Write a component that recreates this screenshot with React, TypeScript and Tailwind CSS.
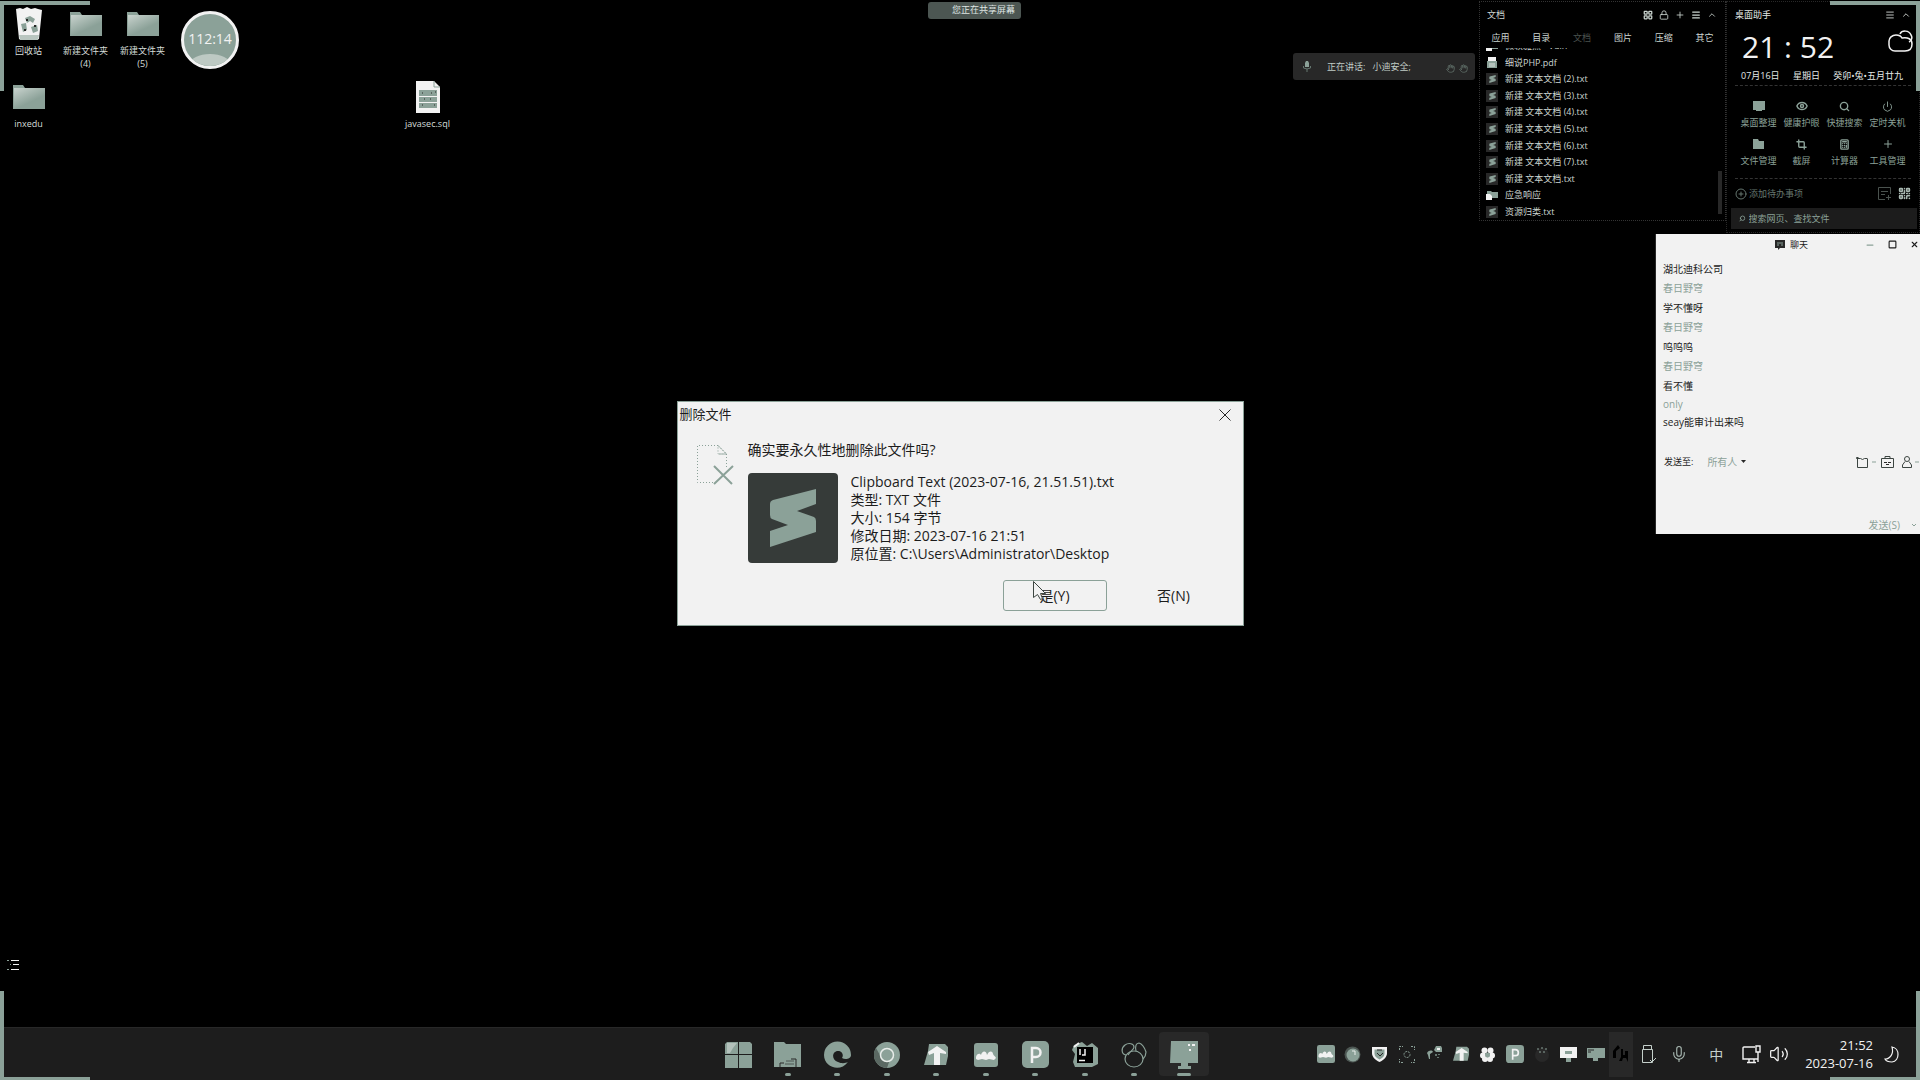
import React from "react";
import {
  Search, Eye, Power, Crop, Plus, Calculator, Menu, ChevronUp, LayoutGrid, QrCode, Mic, Volume2,
  Minus, Square, X, CirclePlus, Lock, Hand,
} from "lucide-react";

const sans = "font-['Open_Sans','Noto_Sans_CJK_SC',sans-serif]";

function Folder() {
  return (
    <svg width="32" height="26" viewBox="0 0 32 26" aria-hidden="true">
      <defs>
        <linearGradient id="folderFace" x1="0" y1="0" x2="0.7" y2="1">
          <stop offset="0" stopColor="#c9d3ce" />
          <stop offset="0.7" stopColor="#8ba198" />
        </linearGradient>
      </defs>
      <path d="M0 1h10l2 3h20v21H0z" fill="#8ba198" />
      <path d="M1 4h31v21H1z" fill="url(#folderFace)" />
    </svg>
  );
}

function RecycleBin() {
  return (
    <svg width="26" height="34" viewBox="0 0 26 34" aria-hidden="true">
      <path d="M0 2l4-1 3 1 4-2 4 2 4-1 3 1 4 1-3 29-3 1H5l-2-1z" fill="#f2f2f2" />
      <path d="M3 28h20l-1 5H4z" fill="#b9c6c0" />
      <path d="M9 11l5-2 5 3-2 4-3-2-3 2zM5 17l5-1 1 7-4 2zM15 20l6-2 1 6-5 2z" fill="#8ba198" />
      <path d="M10 12h2v2h-2zM18 18h2v2h-2zM8 22h2v2H8z" fill="#282828" />
    </svg>
  );
}

function SqlFile() {
  return (
    <svg width="24" height="32" viewBox="0 0 24 32" aria-hidden="true">
      <path d="M0 0h18l6 6v26H0z" fill="#f2f2f2" />
      <path d="M18 0v6h6" fill="none" stroke="#8ba198" />
      <path d="M3 9h18v6H3zM3 16h18v5H3zM3 22h18v5H3z" fill="#8ba198" />
      <path d="M6 12h1M15 12h1M19 11h1M8 18h1M14 18h1M6 24h1M18 24h1" stroke="#282828" />
    </svg>
  );
}

function DesktopIcon({ label, place, children }: { label: string; place: string; children: React.ReactNode }) {
  return (
    <button type="button" className={`flex flex-col items-center ${place}`}>
      <span className="flex h-[34px] items-center justify-center">{children}</span>
      <span className="mt-[3px] w-[50px] text-center text-[9px] leading-[13px] text-[#d5ddd9]">{label}</span>
    </button>
  );
}

function SublimeMark({ className }: { className: string }) {
  return (
    <svg viewBox="0 0 46 58" className={className} aria-hidden="true">
      <path d="M0 15Q0 12 3 11L46 0v15L27 22l17 6q2 1 2 4v11L0 58V42l18-6L2 30Q0 29 0 26z" fill="#8ba198" />
    </svg>
  );
}

function TxtIcon() {
  return (
    <span className="flex size-3 shrink-0 items-center justify-center bg-[#282828]">
      <SublimeMark className="h-[8px] w-[7px]" />
    </span>
  );
}

function PdfIcon() {
  return (
    <svg width="12" height="12" viewBox="0 0 12 12" className="shrink-0" aria-hidden="true">
      <path d="M2 0h8v5H2z" fill="#f2f2f2" />
      <path d="M1 4h10v7H1z" fill="#8ba198" />
      <path d="M3 7h6M3 9h6" stroke="#dfe5e2" />
    </svg>
  );
}

function SmallFolder() {
  return (
    <svg width="12" height="12" viewBox="0 0 12 12" className="shrink-0" aria-hidden="true">
      <path d="M1 2h4l1 1h6v6H1z" fill="#8ba198" />
      <path d="M0 5h4l2 2v4H0z" fill="#f2f2f2" />
    </svg>
  );
}

const files: { name: string; kind: "txt" | "pdf" | "dir" }[] = [
  { name: "微软雅黑 - Vuln", kind: "dir" },
  { name: "细说PHP.pdf", kind: "pdf" },
  { name: "新建 文本文档 (2).txt", kind: "txt" },
  { name: "新建 文本文档 (3).txt", kind: "txt" },
  { name: "新建 文本文档 (4).txt", kind: "txt" },
  { name: "新建 文本文档 (5).txt", kind: "txt" },
  { name: "新建 文本文档 (6).txt", kind: "txt" },
  { name: "新建 文本文档 (7).txt", kind: "txt" },
  { name: "新建 文本文档.txt", kind: "txt" },
  { name: "应急响应", kind: "dir" },
  { name: "资源归类.txt", kind: "txt" },
];

const tabs = ["应用", "目录", "文档", "图片", "压缩", "其它"];

function DocumentsPanel() {
  return (
    <section className="absolute top-px right-[194px] flex h-[220px] w-[247px] flex-col border border-dotted border-[#333] bg-black text-[9px] text-[#ccd6d1]">
      <header className="flex h-[25px] items-center justify-between pr-2 pl-[7px]">
        <h2>文档</h2>
        <div className="flex gap-[6px]">
          <button type="button" aria-label="视图"><LayoutGrid size={10} strokeWidth={3} /></button>
          <button type="button" aria-label="锁定"><Lock size={10} /></button>
          <button type="button" aria-label="添加"><Plus size={10} /></button>
          <button type="button" aria-label="菜单"><Menu size={10} strokeWidth={3} /></button>
          <button type="button" aria-label="收起"><ChevronUp size={10} /></button>
        </div>
      </header>
      <nav className="flex h-[21px] items-center">
        {tabs.map((t) => (
          <button key={t} type="button" className={t === "文档" ? "flex-1 text-[#4a524e]" : "flex-1"}>{t}</button>
        ))}
      </nav>
      <div className="relative flex-1 overflow-hidden">
        <ul className="-mt-[10px] flex h-[182px] flex-col">
          {files.map((f) => (
            <li key={f.name} className="flex flex-1 items-center gap-[7px] pl-[6px] whitespace-pre">
              {f.kind === "txt" ? <TxtIcon /> : f.kind === "pdf" ? <PdfIcon /> : <SmallFolder />}
              <span className="leading-[16px]">{f.name}</span>
            </li>
          ))}
        </ul>
        <div className="absolute right-[3px] bottom-[6px] h-[43px] w-1 bg-[#282828]" />
      </div>
    </section>
  );
}

const tools: { label: string; icon: React.ReactNode }[] = [
  { label: "桌面整理", icon: <svg width="12" height="11" viewBox="0 0 12 11"><path d="M0 0h12v9H9v1H3V9H0z" fill="#8ba198" /></svg> },
  { label: "健康护眼", icon: <Eye size={12} strokeWidth={3} /> },
  { label: "快捷搜索", icon: <Search size={11} strokeWidth={3} /> },
  { label: "定时关机", icon: <Power size={11} /> },
  { label: "文件管理", icon: <svg width="11" height="10" viewBox="0 0 11 10"><path d="M0 0h5l1 2h5v8H0z" fill="#8ba198" /></svg> },
  { label: "截屏", icon: <Crop size={11} strokeWidth={3} /> },
  { label: "计算器", icon: <Calculator size={11} strokeWidth={3} /> },
  { label: "工具管理", icon: <Plus size={12} /> },
];

function AssistantPanel() {
  return (
    <section className="absolute top-px right-0 flex h-[232px] w-[194px] flex-col border border-dotted border-[#282828] bg-black text-[9px] text-[#e4e9e6]">
      <header className="flex h-[26px] items-center justify-between pr-2 pl-2">
        <h2>桌面助手</h2>
        <div className="flex gap-[6px]">
          <button type="button" aria-label="菜单"><Menu size={10} /></button>
          <button type="button" aria-label="收起"><ChevronUp size={10} /></button>
        </div>
      </header>
      <div className="flex h-[38px] items-center justify-between pr-[6px] pl-[15px]">
        <time className="text-[30px] leading-[38px] text-[#f2f2f2]">21 : 52</time>
        <svg width="25" height="23" viewBox="0 0 25 23" fill="none" stroke="#f2f2f2" strokeWidth="1.5" className="mb-3" aria-hidden="true">
          <path d="M12 4c2-4 9-4 11 1 2 3 0 6-2 7" />
          <path d="M7 21a6 6 0 0 1-6-6v-4c0-3 3-6 7-6 3 0 5 1 6 3 6-1 10 1 10 6 0 5-3 7-7 7z" />
        </svg>
      </div>
      <div className="mx-2 flex h-[20px] items-center justify-between border-b border-dashed border-[#333] pr-2 pl-[6px]">
        <span>07月16日</span><span>星期日</span><span>癸卯•兔•五月廿九</span>
      </div>
      <ul className="mx-1 mt-[10px] grid h-[82px] grid-cols-4 content-start px-[6px] text-[#8ba198]">
        {tools.map((t) => (
          <li key={t.label}>
            <button type="button" className="flex h-[38px] w-full flex-col items-center whitespace-nowrap">
              <span className="flex h-5 items-center">{t.icon}</span>
              <span className="leading-[13px]">{t.label}</span>
            </button>
          </li>
        ))}
      </ul>
      <div className="mx-2 flex h-[30px] items-center border-t border-dashed border-[#333] text-[#65766f]">
        <CirclePlus size={12} />
        <span className="ml-[2px]">添加待办事项</span>
        <button type="button" aria-label="清单" className="ml-auto">
          <svg width="13" height="13" viewBox="0 0 13 13" fill="none" stroke="#4a524e"><path d="M12.500 7V.500H.500v12H7M3 4.500h7M3 7.500h4M8 10.500h5M10.500 8v5" /></svg>
        </button>
        <button type="button" aria-label="二维码" className="ml-[7px] text-[#a9b9b2]"><QrCode size={13} strokeWidth={3} /></button>
      </div>
      <label className="mr-[2px] ml-1 flex h-[21px] items-center bg-[#1c1c1c] px-2 text-[#8ba198]">
        <Search size={7} strokeWidth={3} className="mr-[3px] -scale-x-100" />
        <input aria-label="搜索" placeholder="搜索网页、查找文件" className="w-full bg-transparent outline-none placeholder:text-[#8ba198]" />
      </label>
    </section>
  );
}

const messages = [
  { from: "", text: "湖北迪科公司" },
  { from: "春日野穹", text: "学不懂呀" },
  { from: "春日野穹", text: "呜呜呜" },
  { from: "春日野穹", text: "看不懂" },
];

function ChatWindow() {
  return (
    <section className="absolute top-[234px] right-0 flex h-[300px] w-[265px] flex-col border-l border-[#282828] bg-[#f2f2f2] text-[10px] text-[#1c1c1c]">
      <header className="relative flex h-[21px] items-center justify-center text-[9px]">
        <h2 className="flex items-center gap-[5px] pl-[7px]">
          <svg width="10" height="10" viewBox="0 0 10 10" aria-hidden="true">
            <path d="M0 0h10v8H5L3 10V8H0z" fill="#282828" />
            <path d="M2 3h6M2 5h2M6 5h2" stroke="#8ba198" />
          </svg>
          聊天
        </h2>
        <div className="absolute right-px flex items-center gap-[13px]">
          <button type="button" aria-label="最小化" className="text-[#8ba198]"><Minus size={10} strokeWidth={3} /></button>
          <button type="button" aria-label="最大化"><Square size={9} strokeWidth={3} /></button>
          <button type="button" aria-label="关闭"><X size={9} strokeWidth={3} /></button>
        </div>
      </header>
      <div className="mt-1 flex-1 pl-[7px]">
        {messages.map((m, i) => (
          <div key={i}>
            {m.from && <p className="h-[19px] leading-[19px] text-[#8ba198]">{m.from}</p>}
            <p className="h-5 leading-5">{m.text}</p>
          </div>
        ))}
        <p className="h-[17px] leading-[17px] text-[#8ba198]">only</p>
        <p className="h-[18px] leading-[18px]">seay能审计出来吗</p>
      </div>
      <div className="flex h-5 items-center pl-2">
        <label htmlFor="sendTo" className="text-[9px]">发送至:</label>
        <select id="sendTo" className="ml-[14px] w-[30px] appearance-none bg-transparent text-[#8ba198]">
          <option>所有人</option>
        </select>
        <svg width="5" height="4" viewBox="0 0 5 4" className="ml-1" aria-hidden="true"><path d="M0 0h5L2.500 3z" fill="#282828" /></svg>
        <div className="ml-auto flex items-center gap-[5px] pr-px">
          <button type="button" aria-label="文件" className="flex items-center gap-[3px]">
            <svg width="13" height="12" viewBox="0 0 13 12" fill="none" stroke="#3c4541"><path d="M.500 2.500h4l2 1 2-1h3M1.500 3v8.500h10V3M.500 2.500v-1h2" /></svg>
            <svg width="4" height="2"><path d="M0 1h4" stroke="#8ba198" /></svg>
          </button>
          <button type="button" aria-label="截图">
            <svg width="13" height="12" viewBox="0 0 13 12" fill="none" stroke="#3c4541"><path d="M.500 2.500h12v9H.500zM4 2.500v-2h5v2" /><path d="M3 6.500h3M7 6.500h3M5 8.500h3" stroke="#282828" /></svg>
          </button>
          <button type="button" aria-label="成员" className="ml-[3px] flex items-center gap-[3px]">
            <svg width="10" height="12" viewBox="0 0 10 12" fill="none" stroke="#3c4541"><circle cx="5" cy="3" r="2.500" /><path d="M3 5.500L.500 9v2.500h9V9L7 5.500" /></svg>
            <svg width="4" height="2"><path d="M0 1h4" stroke="#8ba198" /></svg>
          </button>
        </div>
      </div>
      <textarea aria-label="消息" className="h-[44px] resize-none bg-transparent px-2 outline-none" />
      <div className="flex h-[18px] items-center justify-end gap-3 pr-[4px] text-[#8ba198]">
        <button type="button">发送(S)</button>
        <svg width="4" height="4" aria-hidden="true"><path d="M0 1l2 2 2-2" fill="none" stroke="#8ba198" /></svg>
      </div>
    </section>
  );
}

function DeleteDialog() {
  return (
    <section role="dialog" aria-labelledby="dlgTitle" className="relative flex w-[567px] flex-col border border-[#8ba198] bg-[#f2f2f2] text-[14px] text-[#1c1c1c]">
      <header className="flex h-[25px] items-center justify-between pr-3 pl-[2px]">
        <h1 id="dlgTitle" className="text-[13px]">删除文件</h1>
        <button type="button" aria-label="关闭">
          <svg width="12" height="12" viewBox="0 0 12 12"><path d="M.500.500l11 11M11.500.500l-11 11" stroke="#282828" /></svg>
        </button>
      </header>
      <div className="flex pt-[13px] pl-[19px]">
        <svg width="38" height="42" viewBox="0 0 38 42" fill="none" className="mt-[5px] shrink-0" aria-hidden="true">
          <path d="M21 .500H.500v37H18M29.500 22V9L21 .500V9h8" stroke="#8ba198" strokeDasharray="1 2" />
          <path d="M21 .500L29.500 9H22" stroke="#8ba198" strokeDasharray="2 1" />
          <path d="M17 21l18 18M36 21L17 39" stroke="#8ba198" strokeWidth="2" />
        </svg>
        <div className="ml-[13px]">
          <p className="leading-[20px]">确实要永久性地删除此文件吗?</p>
          <div className="mt-[13px] flex">
            <div className="flex size-[90px] items-center justify-center rounded-[4px] bg-[#363b39]">
              <SublimeMark className="h-[58px] w-[46px]" />
            </div>
            <div className="ml-[13px] leading-[18px]">
              <p>Clipboard Text (2023-07-16, 21.51.51).txt</p>
              <p>类型: TXT 文件</p>
              <p>大小: 154 字节</p>
              <p>修改日期: 2023-07-16 21:51</p>
              <p>原位置: C:\Users\Administrator\Desktop</p>
            </div>
          </div>
        </div>
      </div>
      <div className="flex justify-end gap-[15px] pt-[17px] pr-[17px] pb-[14px]">
        <button type="button" className="h-[31px] w-[104px] rounded-[3px] border border-[#8ba198]">是(Y)</button>
        <button type="button" className="h-[31px] w-[104px]">否(N)</button>
      </div>
      <svg width="14" height="20" viewBox="0 0 14 20" className="absolute top-[179px] left-[355px]" aria-hidden="true">
        <path d="M.500.500v16l4-3 3 5 2-1-2-5h5z" fill="#f2f2f2" stroke="#3c4541" />
      </svg>
    </section>
  );
}

function Lime({ size }: { size: number }) {
  return (
    <svg width={size} height={size} viewBox="0 0 24 24"><rect width="24" height="24" rx="3" fill="#8ba198" />
      <path d="M2 14c1-4 4-4 5-2 1-4 5-5 6 0 2-5 6-4 6-1 1 2 2 2 3 4l-2 2-5-1-3 1-4-1-4 1-2-1z" fill="#f2f2f2" /></svg>
  );
}
function ParkP({ size }: { size: number }) {
  return (
    <svg width={size} height={size} viewBox="0 0 27 27"><rect width="27" height="27" rx="5" fill="#8ba198" />
      <path d="M10 22V7h4a4 4 0 0 1 0 9h-4" fill="none" stroke="#f2f2f2" strokeWidth="2.500" /></svg>
  );
}
function Typo({ size }: { size: number }) {
  return (
    <svg width={size} height={size} viewBox="0 0 24 24"><path d="M5 1h16l3 3v9l-2 9H0L4 8z" fill="#8ba198" />
      <path d="M4 9l9-6 9 6v2l-6-1v12h-6V10l-5 2z" fill="#f2f2f2" /></svg>
  );
}

const apps: { name: string; icon: React.ReactNode }[] = [
  { name: "开始", icon: <svg width="27" height="26" viewBox="0 0 27 26"><path d="M2 0h11v12H0V2zM14 0h11l2 2v10H14zM0 13h13v13H0zM14 13h13v13H14z" fill="#8ba198" /><path d="M2 1h10L8 6 5 11H2z" fill="#b3c1bb" /></svg> },
  { name: "文件资源管理器", icon: <svg width="27" height="25" viewBox="0 0 27 25"><path d="M0 0h10l2 2h15v23H0z" fill="#8ba198" /><path d="M6 25v-4h4M17 17h5v8" fill="none" stroke="#282828" /><path d="M12 19h8M11 22h9" stroke="#4c5652" /></svg> },
  { name: "Edge", icon: <svg width="27" height="27" viewBox="0 0 27 27"><path d="M0 14a13.500 13.500 0 1 1 27 0c0 4-6 5-9 3 2-3 0-7-4-7-6 0-7 9 0 11 4 2 8 1 10 0-8 11-24 5-24-7z" fill="#8ba198" /></svg> },
  { name: "Chrome", icon: <svg width="26" height="26" viewBox="0 0 26 26"><circle cx="13" cy="13" r="13" fill="#8ba198" /><path d="M2 6a13 13 0 0 0 11 20l2-6-8-5z" fill="#5b6963" /><circle cx="13" cy="13" r="6.500" fill="#8ba198" stroke="#e8edea" strokeWidth="1.500" /></svg> },
  { name: "Typora", icon: <Typo size={24} /> },
  { name: "墨刀", icon: <Lime size={24} /> },
  { name: "PixPin", icon: <ParkP size={27} /> },
  { name: "IntelliJ IDEA", icon: <svg width="26" height="26" viewBox="0 0 26 26"><path d="M2 3l8-3 5 4 5-3 6 5v16l-6 3H3l-2-5 2-8-3-4z" fill="#8ba198" /><path d="M2 5l5-4" stroke="#f2f2f2" strokeWidth="2" /><path d="M5 5h16v16H5z" fill="#000" /><path d="M8 7v6M13 7v6h-3M7 18.500h6" stroke="#f2f2f2" strokeWidth="1.500" fill="none" /></svg> },
  { name: "抓包工具", icon: <svg width="26" height="26" viewBox="0 0 26 26" fill="none" stroke="#8ba198" strokeWidth="1.200"><ellipse cx="13" cy="17" rx="9" ry="8" /><path d="M5 13C0 12 0 6 4 3c4-3 9-1 9 2 0 3-4 4-6 8M15 9c-1-5 0-8 3-8 4 1 6 6 7 9 0 3-1 5-3 7" /></svg> },
  { name: "远程桌面", icon: <svg width="28" height="28" viewBox="0 0 28 28"><path d="M1 0h27v22h-10v3h3v3H8v-3h3v-3H0z" fill="#8ba198" /><path d="M18 4h2M22 4h3M19 9h2" stroke="#f2f2f2" strokeWidth="2" /></svg> },
];

const tray: { name: string; icon: React.ReactNode }[] = [
  { name: "墨刀", icon: <Lime size={18} /> },
  { name: "同步", icon: <svg width="17" height="17" viewBox="0 0 17 17"><circle cx="8.500" cy="8.500" r="8" fill="#4c5652" /><circle cx="9" cy="9" r="6.500" fill="#8ba198" /><path d="M8 5h3v4" stroke="#e8edea" fill="none" /></svg> },
  { name: "安全中心", icon: <svg width="15" height="16" viewBox="0 0 15 16"><path d="M0 1h15v6c0 4-3 7-7.500 9C3 14 0 11 0 7z" fill="#f2f2f2" /><path d="M2.500 3.500h10v4c0 3-2 4.500-5 6-3-1.500-5-3-5-6z" fill="#8ba198" /><path d="M5 4h5M5 7l3 3 3-3" stroke="#282828" fill="none" /></svg> },
  { name: "截图", icon: <svg width="16" height="17" viewBox="0 0 16 17" fill="none" stroke="#8ba198" strokeDasharray="2 1"><path d="M.500 4V.500H4M12 .500h3.500V4M15.500 13v3.500H12M4 16.500H.500V13" /><circle cx="8" cy="8.500" r="3" /></svg> },
  { name: "微信", icon: <svg width="16" height="16" viewBox="0 0 16 16"><path d="M1 7c2-3 5-3 6-1l-3 2v5H3l-1-4z" fill="#8ba198" /><path d="M10 0h5l1 2v4h-6L8 4z" fill="#8ba198" /><path d="M9 8h2v2H9zM12 8h2v1h-2zM11 11h2v1h-2z" fill="#65766f" /><path d="M11 2h3v2h-3z" fill="#f2f2f2" /></svg> },
  { name: "Typora", icon: <Typo size={16} /> },
  { name: "云服务", icon: <svg width="15" height="15" viewBox="0 0 15 15"><g fill="#f2f2f2"><circle cx="4.500" cy="3.500" r="3" /><circle cx="10.500" cy="3.500" r="3" /><circle cx="3" cy="8.500" r="3" /><circle cx="12" cy="8.500" r="3" /><circle cx="5" cy="12" r="3" /><circle cx="10" cy="12" r="3" /></g><circle cx="7.500" cy="8" r="2.500" fill="#8ba198" /></svg> },
  { name: "PixPin", icon: <ParkP size={18} /> },
  { name: "输入法", icon: <svg width="16" height="16" viewBox="0 0 16 16"><circle cx="8" cy="9" r="7" fill="#282828" /><path d="M3 3h2M7 2h2M11 3h2M5 6h2M9 6h2" stroke="#8ba198" /></svg> },
  { name: "屏幕共享", icon: <svg width="17" height="16" viewBox="0 0 17 16"><path d="M0 1h17v11H0z" fill="#f2f2f2" /><path d="M5 5h7v3H5zM6 12h5v4H6z" fill="#8ba198" /></svg> },
  { name: "显示器", icon: <svg width="18" height="14" viewBox="0 0 18 14"><path d="M0 1h18v10h-7v3H6v-3H0z" fill="#8ba198" /><path d="M1 3h6M1 5h3" stroke="#282828" /></svg> },
];

function Taskbar() {
  return (
    <footer className="grid h-[53px] grid-cols-[1fr_497px_1fr] border-t border-[#282828] bg-[#1d1d1d]">
      <div />
      <nav className="grid grid-cols-10 pl-[2px]">
        {apps.map((a, i) => (
          <button
            key={a.name}
            type="button"
            aria-label={a.name}
            className={i === 9 ? "my-1 flex flex-col items-center rounded-[4px] bg-[#282828]" : "my-1 flex flex-col items-center"}
          >
            <span className="mt-[8px] flex h-[29px] items-center">{a.icon}</span>
            {i > 0 && <span className={i === 9 ? "mt-[4px] h-[3px] w-[14px] rounded bg-[#8ba198]" : "mt-[4px] h-[3px] w-[6px] rounded bg-[#8ba198]"} />}
          </button>
        ))}
      </nav>
      <div className="flex items-center justify-end pr-[21px]">
        {tray.map((t) => (
          <button key={t.name} type="button" aria-label={t.name} className="flex h-5 w-[27px] items-center justify-center">{t.icon}</button>
        ))}
        <button type="button" aria-label="Sublime" className="flex h-[45px] w-[24px] items-center justify-center bg-[#282828]">
          <svg width="16" height="18" viewBox="0 0 16 18"><path d="M5 0L0 6v7h3V6l4-3zM8 4v8l-2 4h3l1-3h3l2 4V6h-3v4h-2V4z" fill="#000" /></svg>
        </button>
        <button type="button" aria-label="U盘" className="ml-[9px]">
          <svg width="14" height="18" viewBox="0 0 14 18" fill="none" stroke="#c5d0cb"><path d="M1.500.500h8v4h-8zM.500 4.500h10v13H.500zM8 15l2 2 4-4" /></svg>
        </button>
        <button type="button" aria-label="麦克风" className="ml-[14px] text-[#a9b9b2]"><Mic size={18} strokeWidth={1.5} /></button>
        <button type="button" aria-label="输入法中文" className="ml-[21px] text-[14px] text-[#c5d0cb]">中</button>
        <button type="button" aria-label="网络" className="ml-[19px]">
          <svg width="19" height="19" viewBox="0 0 19 19" fill="none" stroke="#f2f2f2" strokeWidth="1.400"><path d="M13 2H2a1 1 0 0 0-1 1v11h15v-5M5 17.500h9M7 14v3M12 14v3M14 1h4v6h-4zM16 7v10" /></svg>
        </button>
        <button type="button" aria-label="音量" className="ml-[8px] text-[#f2f2f2]"><Volume2 size={20} strokeWidth={1.5} /></button>
        <time className="ml-[16px] text-right text-[13px] leading-[18px] text-[#f2f2f2]">
          21:52<br />2023-07-16
        </time>
        <button type="button" aria-label="专注" className="ml-[11px]">
          <svg width="15" height="17" viewBox="0 0 15 17" fill="none" stroke="#f2f2f2" strokeWidth="1.200"><path d="M8 1c8 1 8 14 0 15-3 0-6-1-7-3 5 0 9-5 7-12z" /></svg>
        </button>
      </div>
    </footer>
  );
}

export default function App() {
  return (
    <div className={`relative flex min-h-screen flex-col overflow-hidden bg-black ${sans}`}>
      <main className="relative flex flex-1 items-center justify-center">
        <div className="absolute top-[7px] left-0 grid auto-rows-[73px] grid-cols-[repeat(8,57px)]">
          <DesktopIcon label="回收站" place="col-start-1 row-start-1"><RecycleBin /></DesktopIcon>
          <DesktopIcon label="新建文件夹 (4)" place="col-start-2 row-start-1"><Folder /></DesktopIcon>
          <DesktopIcon label="新建文件夹 (5)" place="col-start-3 row-start-1"><Folder /></DesktopIcon>
          <DesktopIcon label="inxedu" place="col-start-1 row-start-2"><Folder /></DesktopIcon>
          <DesktopIcon label="javasec.sql" place="col-start-8 row-start-2"><SqlFile /></DesktopIcon>
        </div>
        <div className="absolute top-[11px] left-[181px] flex size-[58px] items-center justify-center overflow-hidden rounded-full border-[3px] border-[#f2f2f2] bg-[#8ba198] pb-[3px]">
          <div className="absolute -bottom-[8px] h-[20px] w-[40px] rounded-[50%] bg-[#bdc9c3]" />
          <span className="relative text-[14px] text-[#f2f2f2]">112:14</span>
        </div>
        <div className="absolute top-[2px] left-[928px] flex h-[17px] w-[93px] items-center justify-end rounded-[3px] bg-[#4c5652] pr-[6px] pb-px text-[9px] text-[#dfe5e2]">您正在共享屏幕</div>
        <div className="absolute top-[53px] right-[445px] flex h-[27px] w-[182px] items-center rounded-[3px] bg-[#282828] pr-[7px] pl-[10px] text-[9px] text-[#c0ccc6]">
          <svg width="8" height="11" viewBox="0 0 8 11" aria-hidden="true"><path d="M3 0h2l1 2v4H2V2z" fill="#8ba198" /><path d="M.500 5v2L4 8l3.500-1V5M4 8v3" fill="none" stroke="#65766f" /></svg>
          <span className="ml-[16px]">正在讲话:</span>
          <span className="ml-[7px]">小迪安全;</span>
          <span className="mt-1 ml-auto flex gap-1 text-[#65766f]"><Hand size={9} /><Hand size={9} /></span>
        </div>
        <DocumentsPanel />
        <AssistantPanel />
        <ChatWindow />
        <DeleteDialog />
        <button type="button" aria-label="列表" className="absolute bottom-[56px] left-[7px]">
          <svg width="13" height="12" viewBox="0 0 13 12"><path d="M4 1.500h8M6 5.500h6M4 10.500h8" stroke="#f2f2f2" /><path d="M0 1.500h2M3 5.500h1M0 10.500h2" stroke="#8ba198" /></svg>
        </button>
      </main>
      <Taskbar />
      <div className="pointer-events-none absolute top-px left-0 h-[90px] w-[90px] border-t-4 border-l-4 border-[#8ba198]" />
      <div className="pointer-events-none absolute top-px right-0 h-[90px] w-[90px] border-t-4 border-r-4 border-[#8ba198]" />
      <div className="pointer-events-none absolute bottom-0 left-0 h-[89px] w-[90px] border-b-[3px] border-l-4 border-[#8ba198]" />
      <div className="pointer-events-none absolute right-0 bottom-0 h-[89px] w-[90px] border-r-4 border-b-[3px] border-[#8ba198]" />
    </div>
  );
}
